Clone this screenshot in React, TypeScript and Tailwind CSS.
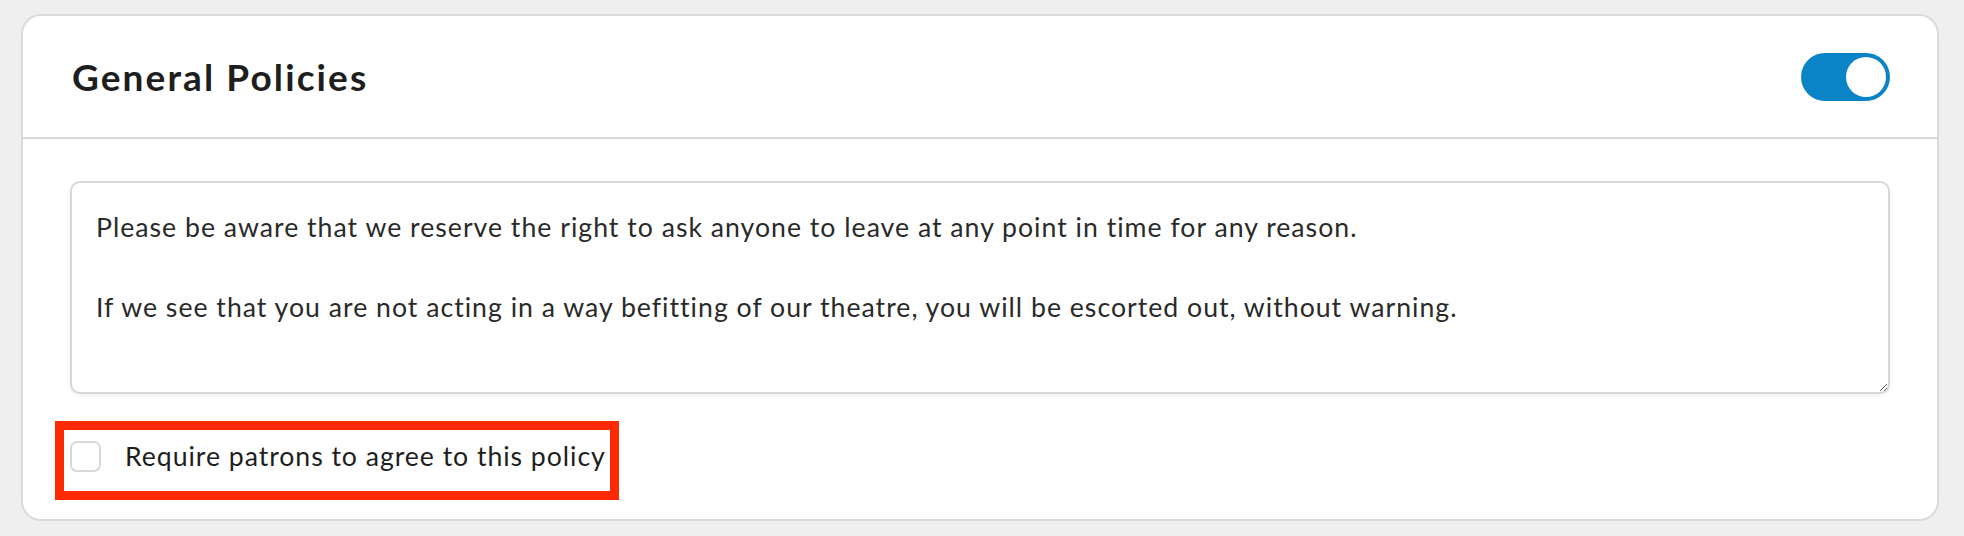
import React from "react";

export default function App() {
  return (
    <div className="min-h-[536px] w-full bg-[#efefef] pt-[14px] pl-[21px] pr-[26px] pb-[17px]" style={{ fontFamily: "Lato, 'Noto Sans', sans-serif" }}>
      <div className="w-[1918px] rounded-[20px] border-2 border-[#dadada] bg-white">
        <div className="flex h-[123px] items-center justify-between border-b-2 border-[#dadada] pl-[49px] pr-[47px]">
          <h2 className="text-[37px] font-bold leading-none tracking-[2.1px] text-[#1e1e1e]">General Policies</h2>
          <button className="flex h-[48px] w-[89px] items-center justify-end rounded-full bg-[#0a84c7] p-[4px]" aria-label="toggle">
            <span className="block h-[40px] w-[40px] rounded-full bg-white" />
          </button>
        </div>
        <div className="pl-[47px] pr-[47px] pt-[42px] pb-[19px]">
          <textarea
            className="block h-[213px] w-full resize-y rounded-[10px] border-2 border-[#d8d8d8] px-[24px] pt-[24px] text-[26.67px] leading-[40px] tracking-[1px] text-[#2a2a2a] shadow-[0_2px_4px_rgba(0,0,0,0.06)] outline-none"
            style={{ fontFamily: "Lato, 'Noto Sans', sans-serif" }}
            defaultValue={"Please be aware that we reserve the right to ask anyone to leave at any point in time for any reason.\n\nIf we see that you are not acting in a way befitting of our theatre, you will be escorted out, without warning."}
          />
          <div className="mt-[27px] -ml-[15px] w-fit border-[9px] border-[#ff2a00]">
            <label className="flex h-[61px] items-start gap-[24px] pl-[6px] pr-[4px] pt-[11px]">
              <span className="block h-[31px] w-[31px] shrink-0 rounded-[7px] border-2 border-[#d9d9d9] bg-white" />
              <span className="text-[26.67px] leading-[31px] tracking-[0.95px] text-[#1e1e1e]">Require patrons to agree to this policy</span>
            </label>
          </div>
        </div>
      </div>
    </div>
  );
}
